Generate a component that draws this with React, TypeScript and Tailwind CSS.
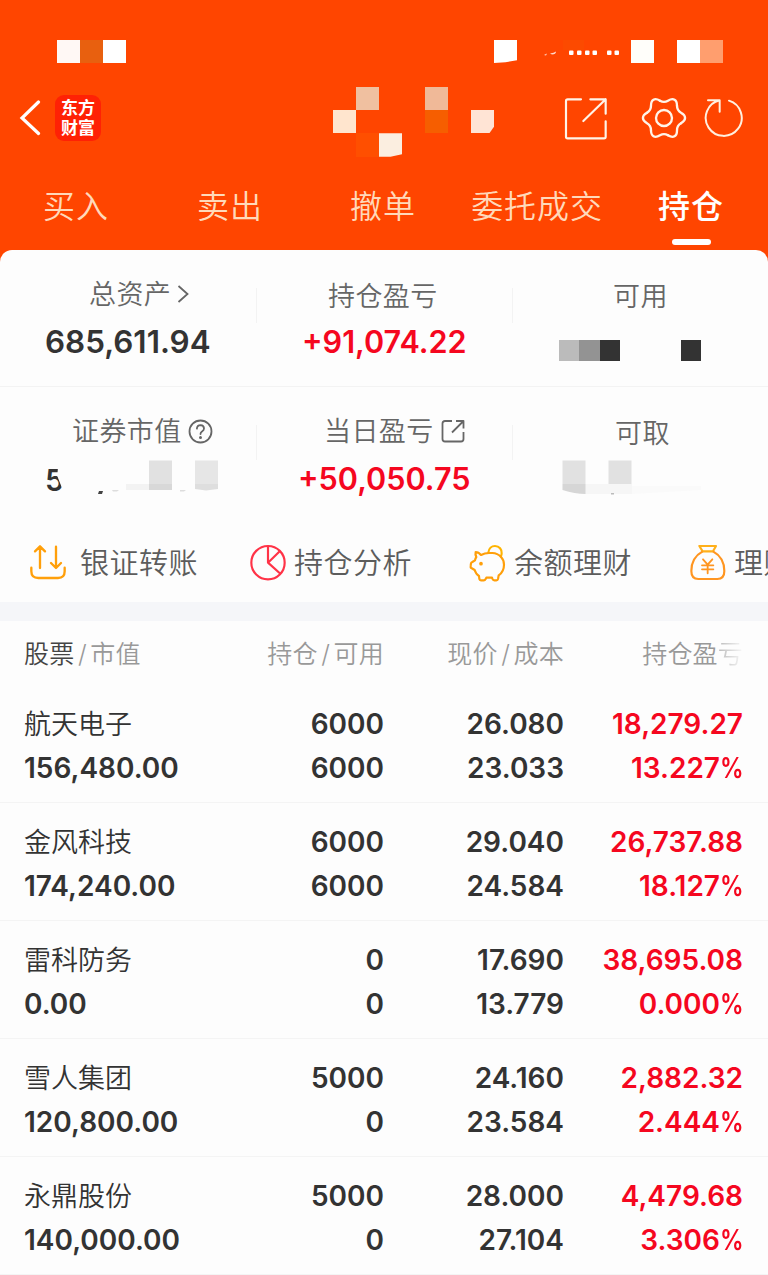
import type { ReactNode } from "react";
import clsx from "clsx";

interface Holding {
  name: string;
  value: string;
  shares: string;
  available: string;
  price: string;
  cost: string;
  profit: string;
  rate: string;
}

const tabs = [
  { label: "买入", width: "w-[152px]" },
  { label: "卖出", width: "w-[156px]" },
  { label: "撤单", width: "w-[150px]" },
  { label: "委托成交", width: "w-[158px]" },
  { label: "持仓", width: "w-[150px]" },
];

const holdings: Holding[] = [
  { name: "航天电子", value: "156,480.00", shares: "6000", available: "6000", price: "26.080", cost: "23.033", profit: "18,279.27", rate: "13.227" },
  { name: "金风科技", value: "174,240.00", shares: "6000", available: "6000", price: "29.040", cost: "24.584", profit: "26,737.88", rate: "18.127" },
  { name: "雷科防务", value: "0.00", shares: "0", available: "0", price: "17.690", cost: "13.779", profit: "38,695.08", rate: "0.000" },
  { name: "雪人集团", value: "120,800.00", shares: "5000", available: "0", price: "24.160", cost: "23.584", profit: "2,882.32", rate: "2.444" },
  { name: "永鼎股份", value: "140,000.00", shares: "5000", available: "0", price: "28.000", cost: "27.104", profit: "4,479.68", rate: "3.306" },
];

// hidden account name, 7 x 3 blocks
const mosaic = [
  "", "bg-[#f0c0a0]", "", "", "bg-[#f0b998]", "", "",
  "bg-[#ffe5ce]", "", "", "", "bg-[#f65e00]", "", "bg-[#ffe4d5] [clip-path:polygon(0_0,100%_0,100%_72%,80%_100%,0_100%)]",
  "", "bg-[#ff4f00]", "bg-[#fbeee0] [clip-path:polygon(0_0,100%_0,100%_90%,50%_100%,0_100%)]", "", "", "", "",
];

function ShareIcon() {
  return (
    <svg className="h-[44px] w-[44px]" viewBox="102 232 132 132" fill="none" stroke="#fff4e8" strokeWidth="6.5" strokeLinecap="round" strokeLinejoin="round">
      <path d="M153 239H113Q108 239 108 244V351Q108 356 113 356H222Q227 356 227 351V305M181 239H227V282M227 239L160 304" />
    </svg>
  );
}

function GearIcon() {
  return (
    <svg className="h-[46px] w-[46px]" viewBox="-69 -69 138 138" fill="none" stroke="#fff4e8" strokeWidth="7" strokeLinecap="round">
      {[0, 60, 120, 180, 240, 300].map((a) => (
        <path key={a} transform={`rotate(${a})`} d="M-12 -52Q0 -45 12 -52C28 -61.5 39.3 -55 39 -36.4" />
      ))}
      <circle r="24" />
    </svg>
  );
}

function RefreshIcon() {
  return (
    <svg className="h-[42px] w-[40px]" viewBox="526 231 120 126" fill="none" stroke="#fff0df" strokeWidth="6" strokeLinecap="round" strokeLinejoin="round">
      <path d="M601 242A54 54 0 1 1 573 241M538 241H573V275" />
    </svg>
  );
}

function TransferIcon() {
  return (
    <svg className="h-[38px] w-[38px]" viewBox="88 462 114 114" fill="none" stroke="#ff9f0a" strokeWidth="7" strokeLinecap="round" strokeLinejoin="round">
      <path d="M121 534V470M106 484L121 469L136 484M169 470V533M154 519L169 534L184 519" />
      <path d="M95 533V544Q95 564 116 564H175Q195 564 195 544V533" />
    </svg>
  );
}

function PieIcon() {
  return (
    <svg className="h-[38px] w-[38px]" viewBox="747 462 114 114" fill="none" stroke="#ff3347" strokeWidth="6.5" strokeLinejoin="round">
      <circle cx="804" cy="518" r="50" />
      <path d="M804 467V518L840 483M804 518L842 552" />
    </svg>
  );
}

function PiggyIcon() {
  return (
    <svg className="h-[38px] w-[38px]" viewBox="0 0 114 114" fill="none" stroke="#ff9f0a" strokeWidth="6.5" strokeLinecap="round" strokeLinejoin="round">
      <path stroke="#ffb400" d="M58 26C59 13 68 6 78 6C91 6 99 16 98 28C98 32 97 35 95 38" />
      <path d="M20 24Q29 24 36 33Q47 27 60 27H70C92 28 105 44 105 62C105 76 99 87 89 94L87 105Q86 109 82 109H76Q72 109 70 104L69 101H52L50 105Q48 109 44 109H36Q32 109 31 105L30 96Q21 91 17 78L7 72Q4 70 5 65L6 58Q7 55 10 54L18 49Q19 43 22 39Q18 32 20 24Z" />
      <circle cx="36" cy="59" r="5.5" fill="#ff9f0a" stroke="none" />
    </svg>
  );
}

function MoneyBagIcon() {
  return (
    <svg className="h-[38px] w-[38px]" viewBox="913 462 114 114" fill="none" stroke="#ff9520" strokeWidth="6.5" strokeLinejoin="round">
      <path stroke="#ffb01a" d="M944 468H994L985 484H954Z" />
      <path d="M954 484C932 496 920 518 920 543Q920 567 941 567H998Q1019 567 1019 543C1019 518 1007 496 985 484" />
      <path strokeWidth="5.5" strokeLinecap="round" d="M955 508L969 524L983 508M969 524V550M952 526H986M952 538H986" />
    </svg>
  );
}

function Stat({ label, icon, className, indent, children }: { label: string; icon?: ReactNode; className: string; indent: string; children: ReactNode }) {
  return (
    <div className={clsx("flex shrink-0 flex-col", className)}>
      <div className={clsx("flex h-10 items-center whitespace-nowrap text-[27px] font-[350] leading-10 tracking-[0.4px] text-[#666]", indent)}>
        {label}
        {icon}
      </div>
      {children}
    </div>
  );
}

function StatValue({ red, className, children }: { red?: boolean; className: string; children: ReactNode }) {
  return (
    <span className={clsx("whitespace-nowrap font-semibold leading-10", red ? "text-[30.6px] text-[#f5071f]" : "text-[31.4px] text-[#333]", className)}>
      {children}
    </span>
  );
}

function Divider() {
  return <div className="mt-[38px] h-[35px] w-px shrink-0 bg-[#f3f3f3]" />;
}

function Action({ icon, label, gap }: { icon: ReactNode; label: string; gap: string }) {
  return (
    <div className={clsx("flex w-[220px] shrink-0 items-center whitespace-nowrap text-[29px] font-[350] tracking-[0.5px] text-[#5c5c5c]", gap)}>
      {icon}
      <span className="pt-0.5">{label}</span>
    </div>
  );
}

function HoldingRow({ item }: { item: Holding }) {
  return (
    <div className="grid h-[118px] grid-cols-[200px_160px_180px_179px] border-b border-[#f4f4f4] pl-6 pt-[18px] text-right text-[28px] font-semibold leading-[43.5px] text-[#333]">
      <div className="text-left">
        <p className="text-[27px] font-[350]">{item.name}</p>
        <p>{item.value}</p>
      </div>
      <div>
        <p>{item.shares}</p>
        <p>{item.available}</p>
      </div>
      <div>
        <p>{item.price}</p>
        <p>{item.cost}</p>
      </div>
      <div className="text-[#f5071f]">
        <p>{item.profit}</p>
        <p>
          {item.rate}
          <span className="inline-block w-[23px] origin-left scale-x-[0.84] text-left">%</span>
        </p>
      </div>
    </div>
  );
}

export default function App() {
  return (
    <div className="h-[1275px] w-[768px] overflow-hidden bg-[#ff4500] font-['Inter','Noto_Sans_CJK_SC',sans-serif]">
      <header className="flex h-[250px] flex-col pt-10">
        <div className="flex h-[23px] items-center pl-[57px]">
          <div className="h-[23px] w-[23px] bg-[#fff8f5]" />
          <div className="h-[23px] w-[23px] bg-[#e8600f]" />
          <div className="h-[23px] w-[23px] bg-white" />
          <div className="ml-[368px] h-[23px] w-[23px] bg-white [clip-path:polygon(0_0,100%_0,100%_88%,50%_97%,0_100%)]" />
          <svg className="ml-[27px] h-[23px] w-[76px]" viewBox="0 0 76 23" fill="#fff">
            <path d="M0 15L3 13.5L2 15.5ZM6 13.5Q10 13 12 11.5Q12 14.5 8 14.5Z" opacity=".8" />
            <rect x="19" y="0" width="21" height="10" fill="#fc4a00" />
            {[25, 33, 41, 48.5, 63, 70.5].map((x) => (
              <rect key={x} x={x} y="10.5" width="4.5" height="4.5" rx="1" />
            ))}
          </svg>
          <div className="ml-[11px] h-[23px] w-[23px] bg-[#fffefa]" />
          <div className="ml-[23px] h-[23px] w-[23px] bg-white" />
          <div className="h-[23px] w-[23px] bg-[#ff9e6e]" />
        </div>

        <div className="mt-[23px] flex h-16 items-center pl-[19px]">
          <svg className="h-9 w-[22px]" viewBox="0 0 22 36" fill="none" stroke="#fff" strokeWidth="3.2" strokeLinecap="round">
            <path d="M19.5 2L3 18L19.5 33.5" />
          </svg>
          <div className="ml-[14px] flex h-[46px] w-[46px] flex-col items-center justify-center rounded-[9px] bg-[#ff2105] text-[17px] font-bold leading-5 text-white">
            <span>东方</span>
            <span>财富</span>
          </div>
          <div className="ml-[232px] grid grid-cols-[repeat(7,23px)] grid-rows-[repeat(3,23.4px)] self-start pt-[0.5px]">
            {mosaic.map((block, i) => (
              <div key={i} className={block} />
            ))}
          </div>
          <div className="ml-[70px] flex items-center">
            <div className="flex pt-0.5"><ShareIcon /></div>
            <div className="ml-[33px] flex"><GearIcon /></div>
            <div className="ml-[17px] flex"><RefreshIcon /></div>
          </div>
        </div>

        <nav className="flex h-[100px] pt-[34px]">
          {tabs.map((tab) => (
            <div
              key={tab.label}
              className={clsx(
                "flex shrink-0 flex-col items-center whitespace-nowrap text-[32px] leading-[46px] tracking-[0.9px]",
                tab.width,
                tab.label === "持仓" ? "font-medium text-white" : "font-[350] text-[#ffd9ba]"
              )}
            >
              {tab.label}
              {tab.label === "持仓" && <span className="mt-[9px] h-1.5 w-[39px] rounded-full bg-white" />}
            </div>
          ))}
        </nav>
      </header>

      <main className="h-[1025px] overflow-hidden rounded-t-[12px] bg-[#fdfdfd]">
        <section className="flex h-[137px] border-b border-[#f3f3f3]">
          <Stat
            label="总资产"
            className="w-[256px] pl-[45px] pt-[25px]"
            indent="ml-[44px]"
            icon={
              <svg className="mb-0.5 ml-1.5 h-5 w-3" viewBox="0 0 12 20" fill="none" stroke="#666" strokeWidth="1.8">
                <path d="M1.5 2L10.5 10L1.5 18" />
              </svg>
            }
          >
            <StatValue className="mt-[7px]">685,611.94</StatValue>
          </Stat>
          <Divider />
          <Stat label="持仓盈亏" className="w-[255px] pl-[45px] pt-[27px]" indent="ml-[26px]">
            <StatValue red className="mt-[5px]">+91,074.22</StatValue>
          </Stat>
          <Divider />
          <Stat label="可用" className="w-[255px] pl-[46px] pt-[27px]" indent="ml-[54px]">
            <div className="mt-[23px] flex h-[21px]">
              <div className="w-[20px] bg-[#bbb]" />
              <div className="w-[21px] bg-[#939393]" />
              <div className="w-[20px] bg-[#333]" />
              <div className="ml-[61px] w-[20px] bg-[#333]" />
            </div>
          </Stat>
        </section>

        <section className="flex h-[137px]">
          <Stat
            label="证券市值"
            className="w-[256px] pl-[45px] pt-[25px]"
            indent="ml-[27px]"
            icon={
              <svg className="mb-0.5 ml-[6px] h-[25px] w-[25px]" viewBox="0 0 25 25" fill="none" stroke="#666" strokeWidth="1.8" strokeLinecap="round">
                <circle cx="12.5" cy="12.5" r="11" />
                <path d="M8.9 9.6Q9.1 6.2 12.6 6.2Q16 6.4 16 9.4Q16 11 14 12.4Q12.5 13.4 12.5 15" />
                <circle cx="12.5" cy="18.4" r=".6" fill="#666" />
              </svg>
            }
          >
            <div className="mt-[8px] flex h-10">
              <span className="w-[17px] text-[30px] font-semibold leading-10 text-[#333] [clip-path:polygon(0_0,80%_0,72%_40%,100%_70%,100%_100%,0_100%)]">5</span>
              <svg className="h-10 w-[160px]" viewBox="62 460 160 40">
                <path d="M99 491H103L102 494H98Z" fill="#444" />
                <rect x="126" y="484" width="23" height="6" fill="#f3f3f3" />
                <path d="M112 490H119L117 491.5H113ZM180 490H186L184 491.5H180Z" fill="#ddd" />
                <rect x="149" y="460.500" width="23" height="23.500" fill="#e1e1e1" />
                <rect x="149" y="484" width="23" height="6" fill="#d8d8d8" />
                <rect x="195" y="460.500" width="23" height="23.500" fill="#e6e6e6" />
                <path d="M195 484H218V489L206 490.5L195 489Z" fill="#dedede" />
              </svg>
            </div>
          </Stat>
          <Divider />
          <Stat
            label="当日盈亏"
            className="w-[255px] pl-[41px] pt-[25px]"
            indent="ml-[26px]"
            icon={
              <svg className="mb-0.5 ml-[7px] h-6 w-6" viewBox="0 0 24 24" fill="none" stroke="#666" strokeWidth="1.8" strokeLinejoin="round">
                <path d="M11 2H4Q1.5 2 1.5 4.5V20Q1.5 22.5 4 22.5H20Q22.5 22.5 22.5 20V13M15 2H22.5V9.5M22.5 2L11 13.5" />
              </svg>
            }
          >
            <StatValue red className="mt-[7px]">+50,050.75</StatValue>
          </Stat>
          <Divider />
          <Stat label="可取" className="w-[255px] pl-[48px] pt-[27px]" indent="ml-[54px]">
            <svg className="mt-[6px] h-10 w-[140px]" viewBox="561 460 140 40">
              <rect x="585" y="484" width="47" height="10" fill="#f6f6f6" />
              <path d="M632 486H701V490L632 494Z" fill="#fafafa" />
              <rect x="562.5" y="460.5" width="23" height="23.5" fill="#e1e1e1" />
              <path d="M562.5 484H585.500V494Q575 494 562.5 490Z" fill="#d6d6d6" />
              <rect x="608.5" y="460.5" width="23" height="23.5" fill="#e1e1e1" />
              <rect x="611" y="493" width="3" height="1.5" fill="#bbb" />
            </svg>
          </Stat>
        </section>

        <section className="flex h-[78px] pl-[29px]">
          <Action icon={<TransferIcon />} label="银证转账" gap="gap-[13px]" />
          <Action icon={<PieIcon />} label="持仓分析" gap="gap-[7px]" />
          <Action icon={<PiggyIcon />} label="余额理财" gap="gap-[7px]" />
          <Action icon={<MoneyBagIcon />} label="理财" gap="gap-[7px]" />
        </section>

        <div className="h-[19px] bg-[#f5f6f9]" />

        <div className="grid h-[64px] grid-cols-[200px_160px_180px_179px] items-center pl-6 pt-[3px] text-right text-[25px] font-[350] tracking-[0.2px] text-[#999]">
          <div className="text-left">
            <span className="text-[#444]">股票</span>
            <span className="px-[3.5px]">/</span>市值
          </div>
          <div>持仓<span className="px-[3.5px]">/</span>可用</div>
          <div>现价<span className="px-[3.5px]">/</span>成本</div>
          <div>
            持仓盈<span className="bg-gradient-to-r from-[#bbb] to-[#f8f8f8] bg-clip-text text-transparent">亏</span>
          </div>
        </div>

        {holdings.map((item) => (
          <HoldingRow key={item.name} item={item} />
        ))}
      </main>
    </div>
  );
}
